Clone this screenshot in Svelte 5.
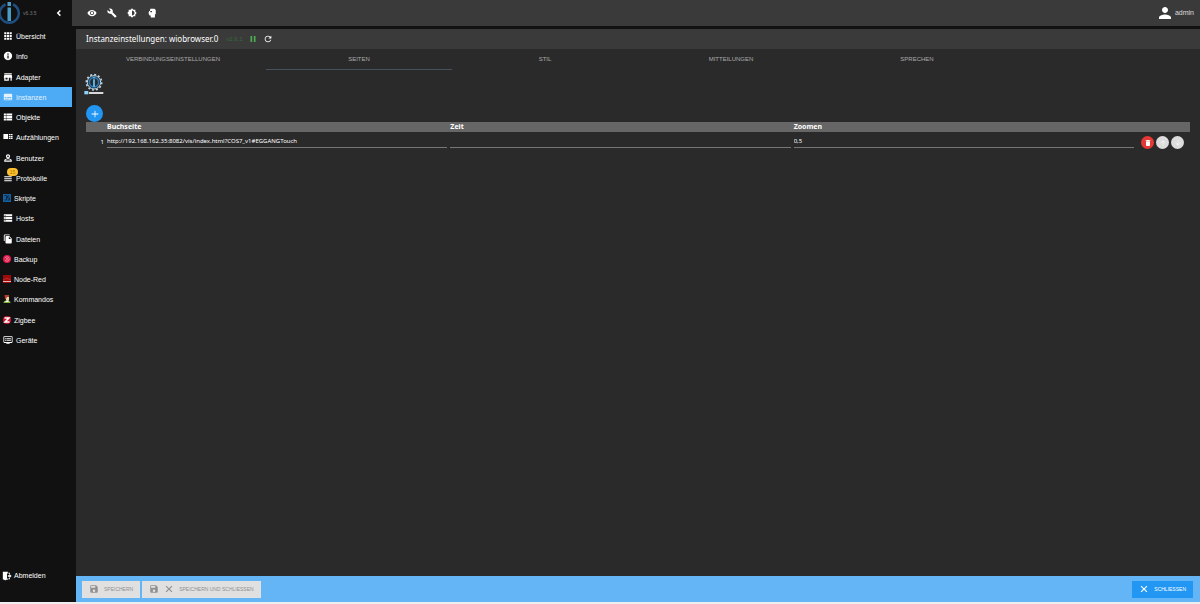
<script>
  const P = {
    apps: 'M3 3h5v5H3zM9.500 3h5v5h-5zM16 3h5v5h-5zM3 9.500h5v5H3zM9.500 9.500h5v5h-5zM16 9.500h5v5h-5zM3 16h5v5H3zM9.500 16h5v5h-5zM16 16h5v5h-5z',
    info: 'M12 2C6.48 2 2 6.48 2 12s4.480 10 10 10 10-4.480 10-10S17.520 2 12 2zm1.500 16h-3v-7h3v7zm0-9h-3V6h3v3z',
    store: 'M21 3H3v3h18V3zm1 11v-2l-1-5H3l-1 5v2h1v7h11v-7h4v7h3v-7h1zm-11 4H6v-4h5v4z',
    subtitles: 'M20 4H4c-1.1 0-2 .9-2 2v12c0 1.1.9 2 2 2h16c1.1 0 2-.9 2-2V6c0-1.1-.9-2-2-2zM4 12h4v2H4v-2zm10 6H4v-2h10v2zm6 0h-4v-2h4v2zm0-4H10v-2h10v2z',
    list: 'M2 14.500h5v-5H2v5zm0 6h5v-5H2v5zM2 8.500h5v-5H2v5zm6 6h14v-5H8v5zm0 6h14v-5H8v5zM8 3.500v5h14v-5H8z',
    enums: 'M1 5h11v12H1zM14 5h3v3h-3zM18 5h5v3h-5zM14 9.500h3v3h-3zM18 9.500h5v3h-5zM14 14h3v3h-3zM18 14h5v3h-5z',
    person: 'M12 5.900a2.100 2.100 0 1 1 0 4.200 2.100 2.100 0 0 1 0-4.200m0 9c2.970 0 6.100 1.460 6.100 2.100v1.100H5.900V17c0-.64 3.130-2.100 6.100-2.100M12 3C9.240 3 7 5.240 7 8s2.240 5 5 5 5-2.240 5-5-2.240-5-5-5zm0 10c-2.670 0-9 1.340-9 4v4h18v-4c0-2.660-6.330-4-9-4z',
    lines: 'M3 15h18v-2.500H3V15zm0 5h18v-2.500H3V20zm0-10h18V7.500H3V10z',
    storage: 'M2 21h20v-5H2v5zm2-3.500h2v2H4v-2zM2 3v5h20V3H2zm4 3.500H4v-2h2v2zm-4 8h20v-5H2v5zm2-3.500h2v2H4v-2z',
    files: 'M16 1H4c-1.100 0-2 .9-2 2v14h2V3h12V1zm-1 4l6 6v10c0 1.100-.9 2-2 2H7.990C6.890 23 6 22.100 6 21l.01-14c0-1.100.89-2 1.990-2h7zm-1 7h5.500L14 6.500V12z',
    devices: 'M21 3H3c-1.100 0-2 .9-2 2v12c0 1.100.9 2 2 2h5v2h8v-2h5c1.100 0 1.990-.9 1.990-2L23 5c0-1.100-.9-2-2-2zm0 14H3V5h18v12zm-2-9H8v2h11V8zm0 4H8v2h11v-2zM7 8H5v2h2V8zm0 4H5v2h2v-2z',
    left: 'M16.500 7L14 4.500 6.500 12l7.500 7.500 2.500-2.500-5-5z',
    eye: 'M12 4.500C7 4.500 2.730 7.610 1 12c1.730 4.390 6 7.500 11 7.500s9.270-3.110 11-7.500c-1.730-4.390-6-7.500-11-7.500zM12 17c-2.760 0-5-2.240-5-5s2.240-5 5-5 5 2.240 5 5-2.240 5-5 5zm0-8c-1.660 0-3 1.340-3 3s1.340 3 3 3 3-1.340 3-3-1.340-3-3-3z',
    wrench: 'M22.700 19l-9.100-9.100c.9-2.300.4-5-1.500-6.900-2-2-5-2.400-7.400-1.300L9 6 6 9 1.600 4.700C.4 7.100.9 10.100 2.900 12.100c1.900 1.900 4.600 2.400 6.900 1.500l9.100 9.100c.4.4 1 .4 1.400 0l2.300-2.300c.5-.4.5-1.100.1-1.400z',
    bright: 'M20 15.310L23.310 12 20 8.690V4h-4.690L12 .69 8.690 4H4v4.690L.69 12 4 15.310V20h4.690L12 23.310 15.310 20H20v-4.690zM12 18V6c3.310 0 6 2.690 6 6s-2.690 6-6 6z',
    head: 'M8 2h10l3 3v9l-2 2v7H9v-5H7c-1.100 0-2-.9-2-2v-3H3l2-4.500V7h2zM8 7h4v3H8z',
    user: 'M12 12c2.210 0 4-1.790 4-4s-1.790-4-4-4-4 1.790-4 4 1.790 4 4 4zm0 2c-2.670 0-8 1.340-8 4v2h16v-2c0-2.660-5.330-4-8-4z',
    pause: 'M6 19h4V5H6v14zm8-14v14h4V5h-4z',
    refresh: 'M17.650 6.350C16.200 4.900 14.210 4 12 4c-4.420 0-7.990 3.580-7.990 8s3.570 8 7.990 8c3.730 0 6.840-2.550 7.730-6h-2.080c-.82 2.330-3.040 4-5.650 4-3.310 0-6-2.690-6-6s2.690-6 6-6c1.660 0 3.140.69 4.220 1.780L13 11h7V4l-2.350 2.350z',
    add: 'M20 13h-7v7h-2v-7H4v-2h7V4h2v7h7v2z',
    trash: 'M6 19c0 1.100.9 2 2 2h8c1.100 0 2-.9 2-2V7H6v12zM19 4h-3.500l-1-1h-5l-1 1H5v2h14V4z',
    up: 'M4 12l1.410 1.410L11 7.830V20h2V7.830l5.580 5.590L20 12l-8-8-8 8z',
    down: 'M20 12l-1.410-1.410L13 16.170V4h-2v12.170l-5.580-5.590L4 12l8 8 8-8z',
    save: 'M17 3H5c-1.110 0-2 .9-2 2v14c0 1.100.89 2 2 2h14c1.100 0 2-.9 2-2V7l-4-4zm-5 16c-1.660 0-3-1.340-3-3s1.340-3 3-3 3 1.340 3 3-1.340 3-3 3zm3-10H5V5h10v4z',
    close: 'M20 6L18 4l-6 6-6-6-2 2 6 6-6 6 2 2 6-6 6 6 2-2-6-6z',
    logout: 'M2 2h12v4h-2v12h2v3H9v2L2 20zM15 4h4v4h-2V6h-2zM15 18h2v-3h2v5h-4zM14 10h4V7l5 5-5 5v-3h-4z'
  };
  const items = [
    ['Übersicht', 'apps'], ['Info', 'info'], ['Adapter', 'store'], ['Instanzen', 'subtitles'],
    ['Objekte', 'list'], ['Aufzählungen', 'enums'], ['Benutzer', 'person'], ['Protokolle', 'lines'],
    ['Skripte', 'js'], ['Hosts', 'storage'], ['Dateien', 'files'], ['Backup', 'backup'],
    ['Node-Red', 'nodered'], ['Kommandos', 'kommandos'], ['Zigbee', 'zigbee'], ['Geräte', 'devices']
  ];
  const tabs = ['VERBINDUNGSEINSTELLUNGEN', 'SEITEN', 'STIL', 'MITTEILUNGEN', 'SPRECHEN'];
  const tools = [['eye', 'Ansicht'], ['wrench', 'Einstellungen'], ['bright', 'Farbschema'], ['head', 'Expertenmodus']];
  let url = $state('http://192.168.162.35:8082/vis/index.html?COS7_v1#EGGANGTouch');
  let time = $state('');
  let zoom = $state('0,5');
</script>

{#snippet icon(name)}
  <svg class="icon" viewBox="0 0 24 24" aria-hidden="true"><path fill-rule="evenodd" d={P[name]} /></svg>
{/snippet}

<div class="app">
  <aside>
    <div class="brand">
      <svg class="logo" viewBox="0 0 44 48" aria-hidden="true">
        <path d="M13 7a19 19 0 1 0 15 0" fill="none" stroke="#1f4e80" stroke-width="5" />
        <path d="M17 13h7v27h-7zM17 2h7v8h-7z" fill="#4a9cc4" />
      </svg>
      <span class="ver">v6.3.5</span>
      <button class="plain" aria-label="Menü einklappen">{@render icon('left')}</button>
    </div>
    <nav>
      {#each items as [label, ic]}
        <a href="#{ic}" class:active={ic === 'subtitles'}>
          {#if ic === 'js'}
            <svg class="pic" viewBox="0 0 16 16" aria-hidden="true"><rect width="16" height="16" fill="#15609c" /><path d="M3 3h4v9H3M13 4H9v4h4v4H9" fill="none" stroke="#0b2b48" stroke-width="2" /></svg>
          {:else if ic === 'backup'}
            <svg class="pic" viewBox="0 0 16 16" aria-hidden="true"><circle cx="8" cy="8" r="8" fill="#e0184a" /><circle cx="8" cy="8" r="4.500" fill="none" stroke="#f5a0b2" stroke-width="1.500" stroke-dasharray="11 3" /><path d="M6 8h4" stroke="#f5a0b2" stroke-width="2" /></svg>
          {:else if ic === 'nodered'}
            <svg class="pic" viewBox="0 0 16 16" aria-hidden="true"><rect width="16" height="16" fill="#9c0a0a" /><path d="M0 10c5 0 4-3 8-3s4 3 8 3" fill="none" stroke="#d03a3a" stroke-width="1.500" /><path d="M0 12h16v2H0z" fill="#e8b0b0" /></svg>
          {:else if ic === 'kommandos'}
            <svg class="pic" viewBox="0 0 16 16" aria-hidden="true"><path d="M1 16c0-4 3-5 7-5s7 1 7 5z" fill="#7cb342" /><path d="M5 3h7v7l-3 4-3-4z" fill="#f0d5b0" /><path d="M3 0h9v4H8L6 8H4z" fill="#b0402c" /><path d="M5 12h6v2H5z" fill="#fff" /></svg>
          {:else if ic === 'zigbee'}
            <svg class="pic" viewBox="0 0 16 16" aria-hidden="true"><circle cx="8" cy="8" r="8" fill="#d0122f" /><path d="M3 4h9L4 12h9" fill="none" stroke="#fff" stroke-width="3" /></svg>
          {:else}
            {@render icon(ic)}
          {/if}
          {#if ic === 'lines'}<span class="badge">15</span>{/if}
          <span class="label">{label}</span>
        </a>
      {/each}
    </nav>
    <div class="foot"><a href="#logout" class="out">{@render icon('logout')}<span>Abmelden</span></a></div>
  </aside>

  <div class="main">
    <header>
      {#each tools as [ic, name]}
        <button class="plain" aria-label={name}>{@render icon(ic)}</button>
      {/each}
      <div class="user"><svg class="icon big" viewBox="0 0 24 24" aria-hidden="true"><path d={P.user} /></svg><span>admin</span></div>
    </header>

    <section class="panel">
      <div class="title">
        <h1>Instanzeinstellungen: wiobrowser.0</h1>
        <span class="iver">v2.6.1</span>
        <button class="plain green" aria-label="Pause">{@render icon('pause')}</button>
        <button class="plain" aria-label="Neu laden">{@render icon('refresh')}</button>
      </div>
      <div class="tabs" role="tablist">
        {#each tabs as t}
          <button role="tab" aria-selected={t === 'SEITEN'}>{t}</button>
        {/each}
      </div>
      <div class="content">
        <svg class="adapter" viewBox="0 0 60 66" aria-hidden="true">
          <circle cx="30" cy="28" r="23" fill="none" stroke="#b9d3e3" stroke-width="5" stroke-dasharray="6 6" />
          <circle cx="30" cy="28" r="20" fill="none" stroke="#b9d3e3" stroke-width="3" />
          <circle cx="30" cy="28" r="14" fill="none" stroke="#2878b8" stroke-width="5" />
          <path d="M27 11h6v5h-6zM27 19h6v23h-6z" fill="#58b0e0" />
          <rect x="1" y="54" width="12" height="10" fill="#8fd0f5" />
          <path d="M15 57h43v6H15z" fill="#d8d8d8" />
        </svg>
        <button class="add" aria-label="Hinzufügen">{@render icon('add')}</button>
        <table>
          <colgroup><col class="num" /><col /><col /><col /><col class="act" /></colgroup>
          <thead><tr><th></th><th>Buchseite</th><th>Zeit</th><th>Zoomen</th><th></th></tr></thead>
          <tbody>
            <tr>
              <td class="idx">1</td>
              <td><input aria-label="Buchseite" bind:value={url} /></td>
              <td><input aria-label="Zeit" bind:value={time} /></td>
              <td><input aria-label="Zoomen" bind:value={zoom} /></td>
              <td>
                <div class="acts">
                  <button class="del" aria-label="Löschen">{@render icon('trash')}</button>
                  <button disabled aria-label="Nach oben">{@render icon('up')}</button>
                  <button disabled aria-label="Nach unten">{@render icon('down')}</button>
                </div>
              </td>
            </tr>
          </tbody>
        </table>
      </div>
      <footer>
        <button disabled>{@render icon('save')}<span>SPEICHERN</span></button>
        <button disabled>{@render icon('save')}{@render icon('close')}<span>SPEICHERN UND SCHLIESSEN</span></button>
        <button class="closeb">{@render icon('close')}<span>SCHLIESSEN</span></button>
      </footer>
    </section>
  </div>
</div>

<style>
  :global(body) { margin: 0; background: #111; }
  * { box-sizing: border-box; }
  button, input { font: inherit; color: inherit; border: 0; padding: 0; margin: 0; background: none; }
  button { cursor: pointer; }
  .app { display: flex; min-height: 100vh; border-bottom: 2px solid #eee; background: #111; color: #fff; font: 7px/10px "Liberation Sans", Arial, sans-serif; }
  .icon { width: 10px; height: 10px; fill: currentColor; flex: none; display: block; }
  .plain { display: flex; }
  aside { width: 72px; flex: none; display: flex; flex-direction: column; background: #111; }
  .brand { height: 26px; display: flex; align-items: center; padding-bottom: 1px; }
  .logo { width: 22px; height: 24px; margin-left: -1px; }
  .ver { color: #777; font-size: 5px; flex: 1; padding-left: 2px; }
  .brand .plain { margin-right: 8px; }
  nav { flex: 9; display: grid; grid-auto-rows: 1fr; }
  nav a, .out { position: relative; display: flex; align-items: center; padding-left: 3px; gap: 3px; color: #fff; text-decoration: none; }
  nav .active { background: #4dabf5; color: #e3f2fd; }
  .label { padding-top: 2px; }
  .pic { width: 8px; height: 8px; flex: none; }
  .badge { position: absolute; left: 7px; top: 0; width: 11px; height: 8px; border-radius: 4px; background: #fbc02d; color: #a9790a; font-size: 5px; line-height: 8px; text-align: center; }
  .foot { flex: 7; display: flex; align-items: flex-end; }
  .out { height: 20px; margin-bottom: 16px; gap: 2px; padding-left: 2px; }
  .main { flex: 1; min-width: 0; display: flex; flex-direction: column; }
  header { height: 26px; display: flex; align-items: center; gap: 10px; padding: 0 6px 0 15px; background: #3a3a3a; }
  .user { margin-left: auto; display: flex; align-items: center; gap: 1px; color: #ddd; }
  .big { width: 18px; height: 18px; color: #fff; }
  .panel { flex: 1; display: flex; flex-direction: column; margin: 3px 0 0 4px; background: #2a2a2a; }
  .title { height: 20px; display: flex; align-items: center; background: #3a3a3a; padding-left: 10px; gap: 5px; }
  h1 { margin: 0 3px 0 0; font: 400 8px/12px "Noto Sans", sans-serif; }
  .iver { color: #356a3a; font-size: 6px; }
  .green { color: #4caf50; }
  .tabs { display: grid; grid-template-columns: repeat(6, 1fr); height: 21px; padding: 0 4px; color: #aaa; font: 6px/20px "Liberation Sans", sans-serif; }
  .tabs button { border-bottom: 1px solid transparent; }
  .tabs button[aria-selected='true'] { border-color: #45525e; }
  .content { flex: 1; padding: 3px 10px 0; font-family: "Noto Sans", sans-serif; }
  .adapter { display: block; width: 20px; height: 22px; margin-left: -2px; }
  .add { display: flex; align-items: center; justify-content: center; width: 17px; height: 17px; margin-top: 10px; border-radius: 50%; background: #2196f3; }
  table { width: 100%; table-layout: fixed; border-collapse: collapse; }
  .num { width: 21px; }
  .act { width: 53px; }
  th { height: 10px; padding: 0; background: #666; text-align: left; font-weight: 700; line-height: 10px; }
  td { padding: 0; vertical-align: top; }
  .idx { padding: 5px 3px 0 0; text-align: right; font-size: 6px; }
  input { display: block; width: calc(100% - 3px); height: 16px; padding-top: 2px; border-bottom: 1px solid #777; border-radius: 0; outline: 0; font-size: 6px; }
  .acts { display: flex; gap: 2px; padding: 4px 0 0 4px; }
  .acts button { display: flex; align-items: center; justify-content: center; width: 13px; height: 13px; border-radius: 50%; background: #dcdcdc; color: #f5f5f5; }
  .acts .icon { width: 8px; height: 8px; }
  .acts .del { background: #e53935; color: #fff; }
  footer { display: flex; align-items: center; gap: 2px; height: 26px; padding: 0 7px 0 6px; background: #64b5f6; }
  footer button { display: flex; align-items: center; gap: 5px; height: 17px; padding: 0 7px; background: #e0e0e0; color: #909090; font: 400 5px/10px "Liberation Sans", sans-serif; }
  footer .closeb { margin-left: auto; background: #2196f3; color: #fff; }
</style>
